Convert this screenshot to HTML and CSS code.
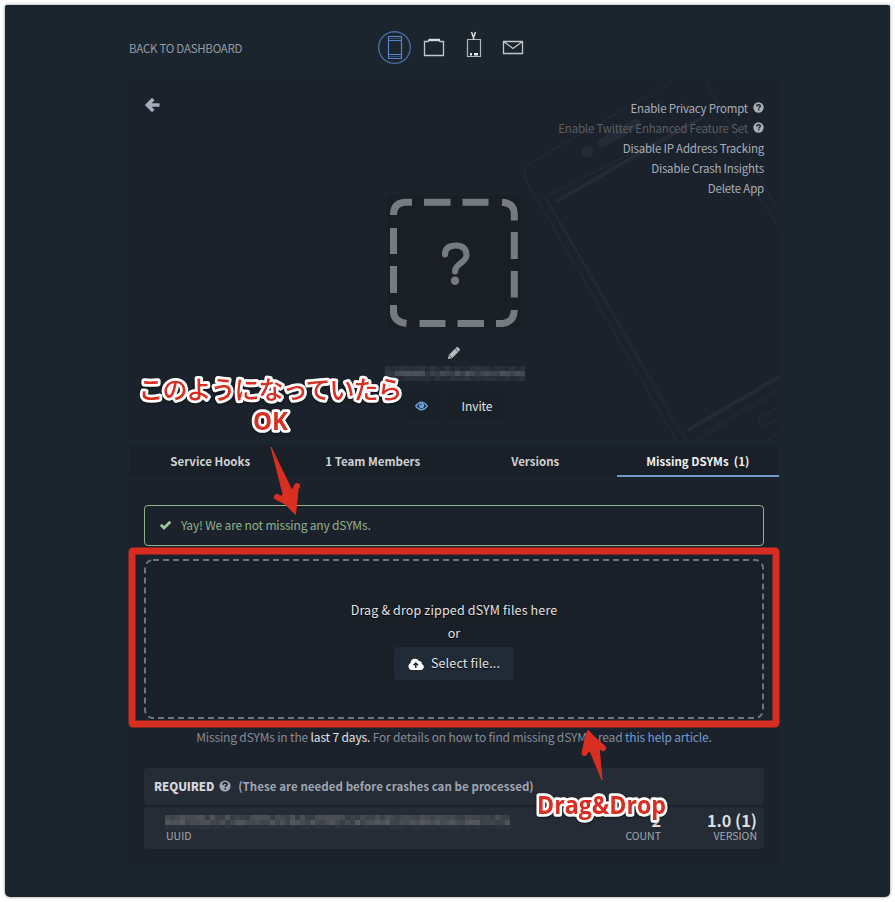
FILE: index.html
```html
<!DOCTYPE html>
<html lang="ja">
<head>
<meta charset="utf-8">
<title>Missing DSYMs</title>
<link rel="stylesheet" href="styles.css">
</head>
<body>
<svg width="0" height="0" class="defs"><defs>
  <symbol id="help" viewBox="0 0 12 12"><circle cx="6" cy="6" r="5.600" fill="currentColor"/><path d="M4.1 4.8C4.1 3.4 5 2.9 6.1 2.9c1.100 0 1.900.6 1.900 1.600C8 5.700 6.300 5.800 6.300 7.100M6.300 8v1.400" fill="none" stroke="#1b212b" stroke-width="1.600"/></symbol>
</defs></svg>
<div class="window">
  <main class="container">
    <header class="topbar">
      <a class="back">BACK TO DASHBOARD</a>
      <svg class="products" width="150" height="36" viewBox="375 30 150 36" fill="none">
        <circle cx="394.500" cy="47.500" r="15.800" stroke="#466a9b" stroke-width="1.400"/>
        <path d="M388.500 36.500h13v22h-13zM388 40.500h14M388 54.500h14" stroke="#5686c8" stroke-width="1.200"/><path d="M389 38.500h12M389 56.500h12" stroke="#34517a"/>
        <path d="M424.500 41.500h3.500l1.500-1.500h9l1.500 1.500h3.500v14h-19z" stroke="#c4c7cb" stroke-width="1.300"/><path d="M428.500 40h11.500" stroke="#d9dadc" stroke-width="2.400"/>
        <path d="M467.500 39.500h13v17h-13z" stroke="#b5b8bd" stroke-width="1.200"/><path d="M471.500 32l2 5.500 2-5.500M473.500 36v3.500" stroke="#ddd" stroke-width="1.500"/><path d="M470 54.200h2M474 54.200h4" stroke="#eee" stroke-width="2.400"/>
        <path d="M503.500 41.500h19v12h-19zl9.500 7 9.500-7" stroke="#c4c7cb" stroke-width="1.300"/>
      </svg>
    </header>
    <section class="hero">
      <svg class="phone" width="650" height="360" viewBox="129 80 650 360" fill="none">
        <g stroke="#222b35" stroke-width="1.200">
          <path d="M674 80 534 161Q520 169 526 180L676 440M705 80 779 211M703 116 779 227M706 116 545 197L684 440M547 199l140 241M779 387 694 440M779 391 698 440M779 407l-17 10q-5 4-3 7t6 2l14-8M779 433l-12 7"/>
        </g>
        <path d="M557 201 703 117M688 430 779 377" stroke="#242b36" stroke-width="4"/>
        <path d="M602 143 636 124" stroke="#242b36" stroke-width="10" stroke-linecap="round"/>
        <circle cx="587.500" cy="151.500" r="6" fill="#242b36"/>
      </svg>
      <svg class="arrow" width="16" height="16" viewBox="0 0 16 16"><path d="M14.500 8H3M8.300 2 2.400 8l5.900 6" fill="none" stroke="#a7acbb" stroke-width="3.600"/></svg>
      <ul class="actions">
        <li>Enable Privacy Prompt <svg><use href="#help"/></svg></li>
        <li class="dim"><span>Enable Twitter Enhanced Feature Set</span> <svg><use href="#help"/></svg></li>
        <li>Disable IP Address Tracking</li>
        <li>Disable Crash Insights</li>
        <li>Delete App</li>
      </ul>
      <div class="identity">
        <svg class="appicon" width="134" height="134" viewBox="387 195 134 134" fill="none">
          <rect x="387" y="195" width="134" height="134" rx="4" fill="#191f25"/>
          <g stroke="#767a81" stroke-width="7">
            <path d="M393.500 215v-1.500Q394 203 405 202.200h7M424 202.200h26.500M462.500 202.200h26M502 202.200Q514 203 514.300 213v7.500M514.300 232v27M514.300 271v26.500M514.300 310Q514 322 503 323.400h-7M484 323.400h-26.500M445.500 323.400h-26M406.500 323.400Q394 322 393.500 312v-7M393.500 293v-27M393.500 254v-26"/>
            <path d="M445 254.500C445 248 449 245.500 456 245.500S466.500 249 466.500 255C466.500 263 455 263 455 271.500" stroke-width="6" stroke-linecap="round"/>
          </g><circle cx="455" cy="280.800" r="4.200" fill="#767a81"/>
        </svg>
        <svg class="pencil" width="14" height="14" viewBox="0 0 14 14"><path d="M1 13l.8-4L9.500 1.300Q10.200.6 11 1.300L12.700 3Q13.400 3.800 12.700 4.500L5 12.200z" fill="#b9bbbe"/><path d="M8.200 2.600l3.200 3.200M2.300 9.300l2.400 2.400" stroke="#1b212b" stroke-width=".7"/></svg>
        <svg class="mosaic" id="name" width="140" height="15" shape-rendering="crispEdges"></svg>
        <div class="buttons">
          <span class="eye"><svg width="13" height="10" viewBox="0 0 13 10"><path d="M.7 5Q6.500-2.800 12.300 5 6.500 12.500.7 5z" fill="none" stroke="#69a0e0" stroke-width="1.300"/><circle cx="6.500" cy="4.600" r="2.700" fill="#69a0e0"/><path d="M5.300 4.500Q5.300 3.300 6.500 3.300" stroke="#1b212b" fill="none" stroke-width=".8"/></svg></span>
          <span class="invite">Invite</span>
        </div>
      </div>
    </section>
    <nav class="tabs"><a>Service Hooks</a><a>1 Team Members</a><a>Versions</a><a class="active">Missing DSYMs&nbsp; (1)</a></nav>
    <section class="content">
      <div class="alert"><svg width="13" height="10" viewBox="0 0 12 10"><path d="M1.300 4.800 4.500 8 10.800 1.700" fill="none" stroke="#a3c79d" stroke-width="2.800"/></svg><span>Yay! We are not missing any dSYMs.</span></div>
      <div class="drop">
        <svg class="dash" width="620" height="160"><rect x="1" y="1" width="618" height="158" rx="8"/></svg>
        <p class="dragtext">Drag &amp; drop zipped dSYM files here</p>
        <p class="or">or</p>
        <span class="select"><svg width="16" height="12" viewBox="0 0 16 12"><path d="M4 12a3.700 3.700 0 0 1-1.500-7A4.600 4.600 0 0 1 11 2.900 2.600 2.600 0 0 1 13.800 6 3.100 3.100 0 0 1 13 12z" fill="#fff"/><path d="M7.800 10V5.500M5.500 7.300l2.300-2.300 2.300 2.300" fill="none" stroke="#202b37" stroke-width="1.500"/></svg><b>Select file...</b></span>
      </div>
      <p class="note">Missing dSYMs in the <em>last 7 days.</em> For details on how to find missing dSYMs, read <a>this help article.</a></p>
      <div class="required"><strong>REQUIRED</strong><svg><use href="#help"/></svg><span>(These are needed before crashes can be processed)</span></div>
      <div class="row">
        <div class="uuid"><svg class="mosaic" id="uuid" width="345" height="14" shape-rendering="crispEdges"></svg><small>UUID</small></div>
        <div class="num"><strong>2</strong><small>COUNT</small></div>
        <div class="num version"><strong>1.0 (1)</strong><small>VERSION</small></div>
      </div>
    </section>
  </main>
</div>
<svg class="notes" width="895" height="902" viewBox="0 0 895 902">
  <rect x="132" y="551" width="644" height="173" rx="1" fill="none" stroke="#d62d20" stroke-width="7" stroke-linejoin="round"/>
  <g fill="#d92e21" stroke="#d92e21" stroke-linejoin="round">
    <path d="M277 497l12 6 8-17" fill="none" stroke-width="6" stroke-linecap="round"/>
    <path d="M271 447l12 47-2 6 14.500 14.500 2.500-24-5 2z"/>
    <path d="M584.500 753l4-18 14.500 13" fill="none" stroke-width="6" stroke-linecap="round"/>
    <path d="M588 730 583 755l7-4 12 29-3-34 4 2z"/>
  </g>
  <g class="labels">
    <text x="138.500" y="399" font-size="25" textLength="264" font-weight="500">このようになっていたら</text>
    <text class="latin" x="253" y="430" font-size="25" textLength="35" lengthAdjust="spacingAndGlyphs">OK</text>
    <text class="latin" x="537" y="814" font-size="25" textLength="129" lengthAdjust="spacingAndGlyphs">Drag&amp;Drop</text>
  </g>
</svg>
<script src="mosaic.js"></script>
</body>
</html>
```
FILE: styles.css
```css
* { box-sizing: border-box; }
body { margin: 0; padding: 5px; width: 895px; height: 902px; overflow: hidden; background: #fff; color: #a0a6b3; font: 12px/20px "Noto Sans CJK JP", "Noto Sans", sans-serif; position: relative; }
p, ul { margin: 0; padding: 0; list-style: none; }
svg { display: block; flex: none; }
.defs { position: absolute; }
.window { width: 885px; height: 892px; background: #1b252e; border-radius: 2px 2px 5px 5px; box-shadow: 0 0 3px rgba(0,0,0,.5); padding: 0 116px 0 124px; }
.container { width: 650px; }
.topbar { height: 75px; display: flex; align-items: flex-start; padding-top: 25px; }
.back { width: 246px; font-size: 11.500px; letter-spacing: -.26px; line-height: 36px; color: #959ba6; }
.hero { height: 360px; background: #1b222b; border-radius: 4px; position: relative; display: grid; grid-template-columns: 1fr 1fr; grid-template-rows: 115px 1fr; overflow: hidden; }
.phone { position: absolute; left: 0; top: 0; }
.arrow { margin: 17px 0 0 16px; }
.actions { justify-self: end; padding: 18px 15px 0 0; text-align: right; position: relative; color: #a9aeba; white-space: nowrap; font-size: 11.500px; letter-spacing: -.2px; }
.actions li { display: flex; justify-content: flex-end; gap: 5px; height: 20px; }
.actions svg { width: 11px; height: 11px; margin-top: 4px; }
.actions .dim span { color: #5b5d61; }
.identity { grid-column: 1 / 3; display: flex; flex-direction: column; align-items: center; }
.pencil { margin-top: 17px; }
#name { margin: 6px 0 0 2px; }
.buttons { display: flex; gap: 8px; margin: 11px 0 0 -1px; }
.buttons span { height: 28px; background: #1a2027; border-radius: 4px; line-height: 28px; text-align: center; }
.buttons .eye { width: 39px; display: grid; place-items: center; }
.buttons .invite { width: 57px; color: #e2e3e5; letter-spacing: -.1px; }
.tabs { margin-top: 5px; height: 31px; display: grid; grid-template-columns: repeat(4, 1fr); background: #1a2027; border-radius: 4px 4px 0 0; text-align: center; font-weight: 700; font-size: 11.500px; line-height: 32px; color: #d0d2d5; }
.tabs a { height: 32px; }
.tabs .active { height: 31.500px; color: #f1f1f2; border-bottom: 2px solid #7299cd; }
.content { height: 389px; background: #1b222b; padding: 29px 15px 0; border-radius: 0 0 4px 4px; }
.alert { height: 41px; border: 1px solid #91b18d; border-radius: 4px; display: flex; align-items: center; padding: 0 0 2px 14px; gap: 9px; color: #91b18d; letter-spacing: -.17px; }
.drop { height: 160px; margin-top: 13px; background: #192027; border-radius: 8px; position: relative; display: flex; flex-direction: column; align-items: center; padding-top: 39px; color: #e3e4e6; font-size: 12.500px; letter-spacing: .15px; text-shadow: 0 1px 1px #000; line-height: 23px; }
.dash { position: absolute; inset: 0; }
.dash rect { fill: none; stroke: #6c747e; stroke-width: 2; stroke-dasharray: 6 4; }
.select { margin-top: 3px; height: 33px; width: 120px; background: #202b37; border-radius: 4px; display: flex; align-items: center; justify-content: center; gap: 7px; }
.select b { font-weight: 400; margin-top: -2px; }
.note { margin-top: 8px; text-align: center; color: #858b98; white-space: nowrap; letter-spacing: -.16px; }
.note em { font-style: normal; color: #e3e4e6; }
.note a { color: #729bd0; }
.required { margin-top: 21px; height: 37px; border-radius: 4px; background: #252c35; display: flex; align-items: center; padding: 0 0 2px 10px; font-weight: 700; font-size: 11.500px; }
.required strong { color: #d4d7dd; letter-spacing: -.1px; }
.required span { letter-spacing: .06px; }
.required svg { width: 12px; height: 12px; margin: 0 7px 0 5px; }
.row { margin-top: 2px; height: 42px; border-radius: 4px; background: #252c35; display: flex; padding-right: 7px; }
.uuid { width: 440px; padding: 8px 0 0 21px; }
small { display: block; font-size: 10.500px; line-height: 12px; color: #a5a8ac; }
.uuid small { margin: 1px 0 0 1px; }
.num { width: 77px; text-align: right; padding-top: 4px; color: #dddee0; }
.num strong { display: block; font-size: 16.300px; line-height: 19px; }
.version { width: 96px; }
.notes { position: absolute; left: 0; top: 0; }
.labels { font-family: "Noto Sans CJK JP", sans-serif; font-weight: 700; fill: #d92e21; stroke: #fff; stroke-width: 5.500px; stroke-linejoin: round; paint-order: stroke; filter: drop-shadow(0 1px 1px rgba(0,0,0,.5)); }
.latin { font-family: "Open Sans", "Noto Sans", sans-serif; font-weight: 700; }
```
FILE: mosaic.js
```js
// Fills an SVG with small tinted cells that stand in for a redacted string.
function mosaic(id, cols, rows, size, levels, rgb) {
  const svg = document.getElementById(id);
  let seed = 7;
  for (let y = 0; y < rows; y++) for (let x = 0; x < cols; x++) {
    seed = (seed * 1103515245 + 12345) % 2147483648;
    const cell = document.createElementNS('http://www.w3.org/2000/svg', 'rect');
    cell.setAttribute('x', x * size);
    cell.setAttribute('y', y * size);
    cell.setAttribute('width', size);
    cell.setAttribute('height', size);
    cell.setAttribute('fill', rgb);
    cell.setAttribute('opacity', levels[y] * (0.4 + 0.6 * seed / 2147483648));
    svg.appendChild(cell);
  }
}
mosaic('name', 28, 3, 5, [0.18, 0.5, 0.2], '#858b96');
mosaic('uuid', 69, 3, 5, [0.42, 0.5, 0.08], '#8a8b8c');
```
